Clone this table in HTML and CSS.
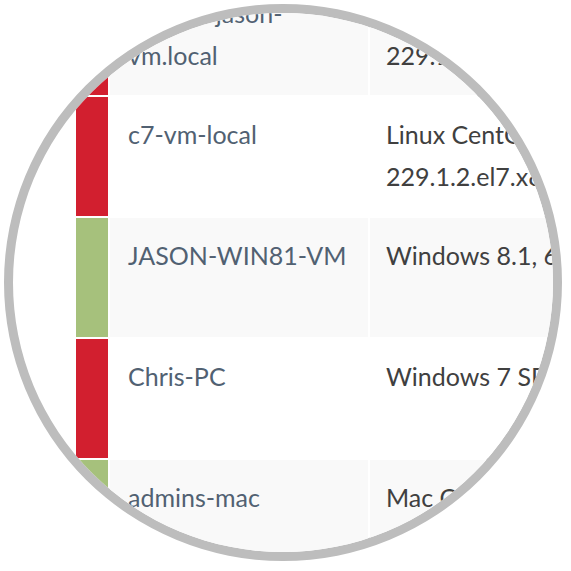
FILE: index.html
```html
<!DOCTYPE html>
<html>
<head>
<meta charset="utf-8">
<link rel="stylesheet" href="styles.css">
</head>
<body>
<div class="stage">
  <div class="lens">
    <table class="hosts">
      <colgroup>
        <col class="c-status">
        <col class="c-name">
        <col class="c-os">
      </colgroup>
      <tbody>
        <tr class="odd">
          <td class="status bad"></td>
          <td class="name"><a href="#">ubuntu-jason-vm.local</a></td>
          <td class="os">Linux CentOS 7.1.1503, 3.10.0-<wbr>229.1.2.el7.x86_64</td>
        </tr>
        <tr class="even">
          <td class="status bad"></td>
          <td class="name"><a href="#">c7-vm-local</a></td>
          <td class="os">Linux CentOS 7.1.1503, 3.10.0-<wbr>229.1.2.el7.x86_64</td>
        </tr>
        <tr class="odd">
          <td class="status ok"></td>
          <td class="name"><a href="#">JASON-WIN81-VM</a></td>
          <td class="os">Windows 8.1, 6.3.9600</td>
        </tr>
        <tr class="even">
          <td class="status bad"></td>
          <td class="name"><a href="#">Chris-PC</a></td>
          <td class="os">Windows 7 SP1, 6.1.7601</td>
        </tr>
        <tr class="odd">
          <td class="status ok"></td>
          <td class="name"><a href="#">admins-mac</a></td>
          <td class="os">Mac OS X 10.11.2</td>
        </tr>
      </tbody>
    </table>
  </div>
</div>
</body>
</html>
```

FILE: styles.css
```css
html, body {
  margin: 0;
  padding: 0;
  background: #ffffff;
}

.stage {
  width: 571px;
  height: 571px;
  padding: 4px 0 0 4px;
  box-sizing: border-box;
  background: #ffffff;
}

.lens {
  width: 558px;
  height: 557px;
  box-sizing: border-box;
  border: 9px solid #bdbdbd;
  border-radius: 50%;
  overflow: hidden;
  background: #ffffff;
}

.hosts {
  table-layout: fixed;
  border-collapse: separate;
  border-spacing: 2px;
  width: 720px;
  margin: -39px 0 0 61px;
  font-family: "Lato", "Liberation Sans", sans-serif;
  font-size: 25px;
  line-height: 42px;
}

.c-status { width: 32px; }
.c-name { width: 258px; }
.c-os { width: 424px; }

.hosts td {
  height: 119px;
  padding: 0;
  vertical-align: top;
  box-sizing: border-box;
}

.hosts tr.odd td { background: #f9f9f9; }
.hosts tr.even td { background: #ffffff; }

.hosts tr td.status.bad { background: #d21f2f; }
.hosts tr td.status.ok { background: #a6c17c; }

.name {
  padding: 16px 14px 0 18px !important;
}

.name a {
  color: #516172;
  text-decoration: none;
}

.os {
  padding: 16px 12px 0 16px !important;
  color: #404040;
}
```
